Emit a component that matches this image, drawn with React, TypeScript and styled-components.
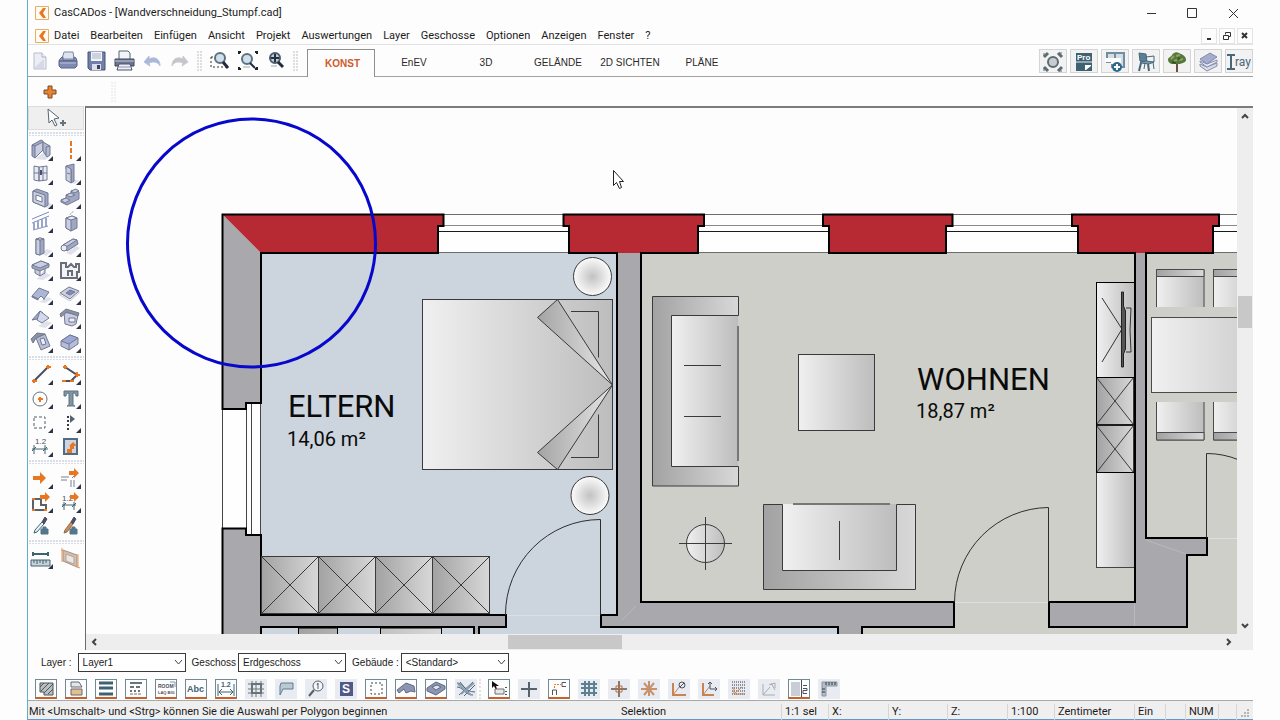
import React, { ReactNode } from "react";
import styled, { createGlobalStyle } from "styled-components";

const UI_FONT = `Roboto, "Open Sans", sans-serif`;
const CLASSIC_FONT = `"Liberation Sans", Arial, sans-serif`;

const GlobalStyle = createGlobalStyle`
  *, *::before, *::after { box-sizing: border-box; }
  body {
    margin: 0;
    background: #fdfdfd;
    color: #1c1c1c;
    font-family: ${UI_FONT};
    font-size: 11px;
    line-height: 16px;
  }
  button, select {
    font: inherit;
    color: inherit;
    margin: 0;
    padding: 0;
    border: 0;
    background: none;
  }
`;

/* ---------- icons ---------- */

const L = "#c9cee0";
const M = "#a0a7c2";
const D = "#727993";
const K = "#4b5060";
const O = "#e87722";
const T = "#3f6273";

const icons: Record<string, ReactNode> = {
  fresh: (
    <g>
      <path d="M6 4h8l4 4v12H6z" fill="#eceef5" stroke="#b9bccb" />
      <path d="M14 4v4h4" fill="#fafafe" stroke="#a9adbd" />
      <path d="M7 18l9-8v9H7z" fill="#d6d9e6" />
    </g>
  ),
  open: (
    <g>
      <path d="M8 3h9l1 7H6z" fill="#dfe3f1" stroke="#7d86a6" />
      <path d="M4 10l2-2h1v3h11V8l2 1 1 3H3z" fill="#8f9abf" stroke="#5e6888" />
      <path d="M3 12h18v5l-2 2H5l-2-2z" fill="#7f8bb2" stroke="#5a6486" />
      <path d="M4 14h16" stroke="#b9c2de" />
    </g>
  ),
  save: (
    <g>
      <path d="M4 3h17v18H6l-2-2z" fill="#7080a8" stroke="#485376" />
      <path d="M7 3h11v9H7z" fill="#f4f5fa" />
      <path d="M8 5h9M8 7h9M8 9h9" stroke="#a8aec4" />
      <path d="M8 15h9v6H8z" fill="#dce0ec" />
      <path d="M13 16h3v4h-3z" fill="#39425f" />
    </g>
  ),
  print: (
    <g>
      <path d="M7 2h9l2 2v7H7z" fill="#f2f4fa" stroke="#5a6078" />
      <path d="M3 10h19v7H3z" fill="#6d7690" stroke="#3f4557" />
      <path d="M3 12h19" stroke="#c3c9da" />
      <path d="M7 15h11l2 6H5z" fill="#eef0f7" stroke="#4e5468" />
      <path d="M7 18h11" stroke="#8f96ab" />
    </g>
  ),
  undo: <path d="M4 13l5-6v3c6-3 11 0 11 7-2-4-6-5-11-3l1 3z" fill="#a9b8da" stroke="#b3c0de" />,
  redo: <path d="M20 13l-5-6v3C9 7 4 10 4 17c2-4 6-5 11-3l-1 3z" fill="#c5c6ca" stroke="#cbccd0" />,
  zoomWindow: (
    <g>
      <path d="M3 8h5M3 8v10h16" fill="none" stroke="#333" strokeDasharray="2 2" />
      <circle cx="12" cy="9" r="5" fill="#cfe0ec" stroke="#5c7182" strokeWidth="2" />
      <path d="M15 13l5 6" stroke="#232a3a" strokeWidth="3" />
    </g>
  ),
  zoomAll: (
    <g>
      <path d="M3 5V3h2M19 3h2v2M3 18v2h2M19 20h2v-2" fill="none" stroke="#222" strokeWidth="2" />
      <circle cx="11" cy="10" r="5" fill="#cfe0ec" stroke="#5c7182" strokeWidth="2" />
      <path d="M14 14l5 5" stroke="#232a3a" strokeWidth="2" />
      <path d="M7 18h7" stroke="#9aa" />
    </g>
  ),
  zoomPan: (
    <g>
      <circle cx="11" cy="9" r="5" fill="#bccfd9" stroke="#4b5b6b" strokeWidth="2" />
      <path d="M11 5v8M7 9h8" stroke="#26303c" strokeWidth="2" />
      <path d="M14 13l5 5" stroke="#232a3a" strokeWidth="3" />
      <path d="M7 17h6" stroke="#9aa" />
    </g>
  ),
  plus: <path d="M10 6h4v4h4v4h-4v4h-4v-4H6v-4h4z" fill="#e8842f" stroke="#7b4a28" />,
  focus: (
    <g fill="none" stroke="#5d6b72">
      <path d="M3 7l4-4M17 3l4 4M3 17l4 4M17 21l4-4" strokeWidth="3" />
      <path d="M3 3v3M18 3h3M3 21v-3M18 21h3" strokeWidth="1" />
      <circle cx="12" cy="12" r="5" fill="#c8ccd0" strokeWidth="2" />
    </g>
  ),
  proDoc: (
    <g>
      <path d="M4 3h16v18H4z" fill={T} />
      <text x="5" y="10" fontSize="8" fontWeight="700" fill="#fff" fontFamily={CLASSIC_FONT}>Pro</text>
      <path d="M4 12h16" stroke="#e9eef0" />
      <path d="M13 15h6v1l-5 4h-1z" fill="#fff" />
    </g>
  ),
  planAdd: (
    <g>
      <path d="M4 3h17v14H9v-5H4z" fill="#d5dde4" stroke="#6f8fa0" strokeWidth="2" />
      <path d="M12 3v5" stroke="#6f8fa0" strokeWidth="2" />
      <path d="M2 8h16v6H8v-2H2z" fill="#fff" />
      <circle cx="14" cy="17" r="5" fill="#2c6a8c" />
      <path d="M14 14v6M11 17h6" stroke="#fff" strokeWidth="2" />
    </g>
  ),
  chair: (
    <g stroke="#45677a" fill="none">
      <path d="M5 3l7 1 1 8-7-1z" fill="#5b8093" />
      <path d="M12 7l8-1v6" />
      <path d="M6 12l6-1 8 1-5 2-8-1z" fill="#7c9baa" />
      <path d="M7 13L5 21M14 14l1 7" strokeWidth="2" />
      <path d="M19 12l1 7M11 13l-1 6" />
    </g>
  ),
  tree: (
    <g>
      <path d="M12 12v10" stroke="#6d5138" strokeWidth="2" />
      <path d="M3 10c0-3 3-3 4-5s4-4 7-2 4 1 6 4 1 5-2 6-3 1-6 1-8 1-9-4z" fill="#56783a" />
      <path d="M6 9l3-3M11 6l4-1M14 10l4-1M9 11l3-1" stroke="#8aa661" strokeWidth="2" />
      <path d="M7 12l4 1M13 8l2 1" stroke="#35512a" strokeWidth="2" />
    </g>
  ),
  layers: (
    <g stroke="#858caa">
      <path d="M4 16l7 5 10-5v-3L11 17l-7-3z" fill="#d9dcea" />
      <path d="M4 12l7 5 10-5v-2L11 14l-7-3z" fill="#eceef6" />
      <path d="M4 9l10-6 7 4-10 7z" fill="#a6acd0" />
    </g>
  ),
  iray: (
    <g>
      <path d="M0 5h8M0 19h8M4 5v14" stroke="#49677a" strokeWidth="2" />
      <text x="8" y="16" fontSize="12" fill="#49677a" fontFamily={UI_FONT}>ray</text>
    </g>
  ),
  pointer: (
    <g>
      <path d="M4 2l1 14 3-3 3 6 2-1-3-6 5-1z" fill="#fff" stroke="#566373" />
      <path d="M19 13v6M16 16h6" stroke="#66727f" strokeWidth="2" />
    </g>
  ),
  wall: (
    <g stroke={D}>
      <path d="M5 21l9-7 6 4-5 4z" fill="#dfe2ec" stroke="none" />
      <path d="M2 7l9-5 2 1v9l-8 8-3-2z" fill={M} />
      <path d="M5 8l8-4v8l-8 8z" fill={L} />
      <path d="M13 4l7 4v9l-3 2-4-6z" fill="#b3b9cf" />
      <path d="M16 9l4-1M16 9v8M2 7l3 1" fill="none" />
    </g>
  ),
  axis: <path d="M13 3v18" stroke={O} strokeWidth="2" strokeDasharray="5 2" />,
  windowTool: (
    <g stroke={D}>
      <path d="M4 4l5 1v14l-5-1zM9 5l8-1v14l-8 1z" fill="#e7eaf4" />
      <path d="M13 5v14M4 11h13" />
      <path d="M11 8v5" stroke={K} strokeWidth="2" />
    </g>
  ),
  door: (
    <g stroke={D}>
      <path d="M10 19l5-2 6 2-5 3z" fill="#dfe2ec" stroke="none" />
      <path d="M8 4l8-2v17l-3 2V8L8 7z" fill={M} />
      <path d="M8 4l5 3v14l-5-3z" fill={L} />
      <path d="M9 11l3 1" />
    </g>
  ),
  opening: (
    <g stroke={D}>
      <path d="M12 20l5-4 5 2-4 4z" fill="#dfe2ec" stroke="none" />
      <path d="M3 5l4-2 11 4v12l-3 2-12-5z" fill={M} />
      <path d="M3 5l12 4v12L3 16z" fill={L} />
      <path d="M6 9l6 2v5l-6-2z" fill="#fff" />
    </g>
  ),
  stairs: (
    <g stroke={D}>
      <path d="M3 14l5-2v-3l5-2V5l6-1 2 2v7l-12 6-6-3z" fill={M} />
      <path d="M3 14l5-2 4 2-5 3zM8 9l5-2 4 2-5 2zM13 5l5-2 3 2-5 2z" fill={L} />
    </g>
  ),
  railing: (
    <g stroke="#7c8cb8" fill="none">
      <path d="M2 9l17-7M2 13l17-7M3 20l15-4" />
      <path d="M4 12v8M8 10v9M12 9v9M16 8v8" strokeWidth="2" stroke="#9aa7cb" />
    </g>
  ),
  chimney: (
    <g stroke={D}>
      <path d="M8 8l6-2 5 2v10l-6 3-5-3z" fill={M} />
      <path d="M8 8l5 2v11l-5-3z" fill={L} />
      <path d="M8 8l6-2 5 2-6 2z" fill="#eceef6" />
      <path d="M12 5c0-3 3-1 3-4" stroke="#b5b9c6" fill="none" />
    </g>
  ),
  column: (
    <g stroke={D}>
      <path d="M11 19l6-4 5 2-6 5z" fill="#dfe2ec" stroke="none" />
      <path d="M6 5l4-1 4 1v14l-4 2-4-1z" fill={M} />
      <path d="M6 5l4 1v15l-4-1z" fill={L} />
      <path d="M6 5l4-1 4 1-4 1z" fill="#fff" />
    </g>
  ),
  beam: (
    <g stroke={D}>
      <path d="M8 19l10-7 4 2-9 7z" fill="#dfe2ec" stroke="none" />
      <path d="M5 11l10-6 4 1 1 4-11 7z" fill={M} />
      <path d="M5 11l10-6 4 1-11 7z" fill={L} />
      <ellipse cx="6" cy="14" rx="3" ry="3" fill="#eceef6" />
    </g>
  ),
  slab: (
    <g stroke={D}>
      <path d="M6 21l10-6 5 2-8 5z" fill="#dfe2ec" stroke="none" />
      <path d="M5 11v4l5 3v-5M10 18l5-3v-4" fill={L} />
      <path d="M2 7l9-4 8 3v3l-9 4-8-3z" fill={M} />
      <path d="M2 7l9-4 8 3-9 4z" fill={L} />
    </g>
  ),
  outline: (
    <g stroke="#6a6e7a" fill="none">
      <path d="M3 5h5v4h2l3-3 3 3h2V6h3v8h-2v6H3z" strokeWidth="2" fill="#f2f3f6" />
      <path d="M10 18v-5h4v5" strokeWidth="2" />
    </g>
  ),
  roofA: (
    <g stroke={D}>
      <path d="M9 20l9-5 4 2-7 4z" fill="#dfe2ec" stroke="none" />
      <path d="M2 14l7-8 10 4-5 7-3-3-3 3z" fill="#aeb6d6" />
      <path d="M2 14l6 3v1l-6-3zM14 17v1" fill={M} />
    </g>
  ),
  roofB: (
    <g stroke={D}>
      <path d="M2 11l9-6 10 4-9 8z" fill={L} />
      <path d="M8 11l4-3 5 2-5 3z" fill="#7f8cbb" />
      <path d="M2 11v2l10 6 9-8V9" fill="none" stroke="#c3c7d6" />
    </g>
  ),
  roofC: (
    <g stroke={D}>
      <path d="M8 20l9-5 5 2-7 5z" fill="#dfe2ec" stroke="none" />
      <path d="M2 14l8-9 3 2-6 6z" fill={M} />
      <path d="M10 5l9 7-7 5-5-3z" fill="#d3d8ec" />
    </g>
  ),
  dormer: (
    <g stroke={D}>
      <path d="M6 6l14 3-2 9-4 2-7-2z" fill={L} />
      <path d="M2 8l6-5 13 4-1 3L9 6l-6 5z" fill="#8c929f" />
      <path d="M11 12h6v4h-6z" fill="#eef0f8" />
    </g>
  ),
  skylight: (
    <g stroke={D}>
      <path d="M6 8l9-4 5 12-9 4z" fill="#b7bdd6" />
      <path d="M1 9l6-6 8 1-9 4-3 5z" fill="#8c929f" />
      <path d="M10 9l4-1 2 6-4 1z" fill="#e9ecfa" />
    </g>
  ),
  solid: (
    <g stroke={D}>
      <path d="M3 11l9-6 8 3v6l-9 6-8-4z" fill="#b7bdd6" />
      <path d="M3 11l9-6 8 3-9 6z" fill="#9ea8d6" />
      <path d="M11 14v6" />
    </g>
  ),
  line: (
    <g>
      <path d="M4 19L18 5" stroke={K} strokeWidth="2" />
      <path d="M2 19h5M4 17v4M16 5h5M18 3v4" stroke={O} strokeWidth="2" />
    </g>
  ),
  polyline: (
    <g fill="none">
      <path d="M7 5l12 8-6 6H6" stroke={K} strokeWidth="2" />
      <path d="M5 5h4M7 3v4M17 13h5M19 10v5M4 19h4M12 19h4" stroke={O} strokeWidth="2" />
    </g>
  ),
  circle: (
    <g fill="none">
      <circle cx="10" cy="13" r="7" stroke="#6b7079" />
      <path d="M10 11v5M8 13h5" stroke={O} strokeWidth="2" />
    </g>
  ),
  text: (
    <path d="M6 5h14v5h-2c0-2-1-3-3-3v11c0 1 1 2 2 2H9c1 0 2-1 2-2V7C9 7 8 8 8 10H6z" fill="#8194a4" stroke="#5c7080" />
  ),
  select: <path d="M4 7h11v11H4z" fill="none" stroke="#555b66" strokeDasharray="3 2" />,
  mirror: (
    <g>
      <path d="M10 6v14" stroke="#333a48" strokeWidth="2" strokeDasharray="2 2" />
      <path d="M12 5l5 4-5 4z" fill="#566270" />
    </g>
  ),
  dimension: (
    <g stroke={T} fill="none">
      <text x="5" y="10" fontSize="8" fill={K} stroke="none" fontFamily={CLASSIC_FONT}>1.2</text>
      <path d="M2 15h16M4 11v9M15 11v9M2 17l4-4M13 17l4-4" />
    </g>
  ),
  image: (
    <g>
      <path d="M6 5h13v15H6z" fill="#cbd5e6" stroke="#526b82" strokeWidth="2" />
      <path d="M9 19v-4h3v-3h-1l4-4 4 4h-3v3h-2v4z" fill={O} />
    </g>
  ),
  move: <path d="M3 10h7V6l6 6-6 6v-4H3z" fill={O} />,
  moveWall: (
    <g>
      <path d="M3 11h8M3 14h6M13 14v7M16 14v7M14 12l2-2" stroke="#7b828e" />
      <path d="M11 5h5V2l5 5-5 5V9h-5z" fill={O} />
    </g>
  ),
  moveShape: (
    <g>
      <path d="M3 9h8v6h5v5H3z" fill="none" stroke="#5b6069" strokeWidth="2" />
      <path d="M2 9h3M2 20h3M14 20h3" stroke={O} strokeWidth="2" />
      <path d="M10 5h5V2l5 5-5 5V9h-5z" fill={O} />
    </g>
  ),
  moveDim: (
    <g fill="none">
      <text x="4" y="11" fontSize="8" fill={K} fontFamily={CLASSIC_FONT}>1.2</text>
      <path d="M4 15h14M6 12v8M16 12v8M4 17l4-4M14 17l4-4" stroke={T} />
      <path d="M12 5h4V2l5 5-5 5V9h-4z" fill={O} />
    </g>
  ),
  pipette: (
    <g>
      <path d="M4 19l1-3 7-8 2 2-7 8z" fill="#eef2f6" stroke={T} />
      <path d="M12 8l3-5 2 2-3 5z" fill={K} stroke={K} />
      <path d="M11 15h7v5h-7zM13 15v-2h3v2" fill="#55778c" stroke="#55778c" />
    </g>
  ),
  pipetteFill: (
    <g>
      <path d="M6 19l1-3 6-8 2 2-6 8z" fill="#d98c4d" stroke="#8b6a4d" />
      <path d="M13 8l3-5 2 2-3 5z" fill={K} stroke={K} />
      <path d="M12 15h7v5h-7zM14 15v-2h3v2" fill="#55778c" stroke="#55778c" />
    </g>
  ),
  ruler: (
    <g stroke={T} fill="none">
      <path d="M3 8h15M3 6v4M18 6v4" strokeWidth="2" />
      <path d="M1 14h19v6H1z" fill="#c9d2d6" />
      <path d="M4 14v3M7 14v4M10 14v3M13 14v4M16 14v3" />
    </g>
  ),
  section: (
    <g>
      <path d="M5 4l14 5v12L5 15z" fill="#cdbfb6" stroke="#a8907f" />
      <path d="M8 8l8 3v7l-8-3z" fill="#ece6e2" stroke="#b5a396" />
      <path d="M4 2v14M20 8v14M3 4l4 1M17 20l5 2" stroke="#e39a5d" />
    </g>
  ),
  hatch: (
    <g stroke="#4a555b">
      <path d="M5 5h13v12H9v-3H5z" fill="#b9bfc2" />
      <path d="M5 9l4-4M6 13l8-8M9 15l9-9M13 16l5-5" />
    </g>
  ),
  fill: (
    <g>
      <path d="M6 4h8l3 5H6z" fill="#e4e6e8" stroke="#667" />
      <path d="M6 11h11v6H6z" fill="#e3c08f" stroke="#667" />
    </g>
  ),
  lineWeight: <path d="M4 5h14M4 10h14M4 16h14" stroke={T} strokeWidth="3" />,
  lineType: (
    <g stroke="#6a7378">
      <path d="M5 5h12" strokeWidth="2" />
      <path d="M5 9h12" strokeDasharray="4 2" strokeWidth="2" />
      <path d="M5 13h12" strokeDasharray="2 2" strokeWidth="2" />
      <path d="M5 16h12" strokeDasharray="3 1" />
    </g>
  ),
  room: (
    <g fontFamily={CLASSIC_FONT} fontWeight="700" fill={K}>
      <text x="3" y="10" fontSize="5">ROOM</text>
      <text x="3" y="16" fontSize="4">LAQ BIG</text>
      <path d="M15 4h5v5" fill="none" stroke="#8c979c" />
    </g>
  ),
  abc: (
    <text x="2" y="14" fontSize="9" fontWeight="700" fill={T} fontFamily={CLASSIC_FONT}>Abc</text>
  ),
  measure: (
    <g stroke={T}>
      <text x="6" y="9" fontSize="7" fill={T} stroke="none" fontWeight="700" fontFamily={CLASSIC_FONT}>1.2</text>
      <path d="M3 6v12M19 6v12M4 14h14M7 11l-3 3 3 3M15 11l3 3-3 3" fill="none" />
    </g>
  ),
  gridTool: (
    <g stroke="#6a7279" fill="none">
      <path d="M7 6h9v9H7z" strokeWidth="2" />
      <path d="M3 6h16M3 15h16M7 3v16M16 3v16M11 3v16M3 11h16" />
    </g>
  ),
  callout: <path d="M6 5h12v6H8l-3 6V8z" fill="#b9cad5" stroke="#5e7e8f" />,
  loupeOne: (
    <g stroke="#565f68">
      <circle cx="13" cy="8" r="5" fill="#f4f6f9" />
      <path d="M9 12l-5 6" strokeWidth="2" />
      <path d="M12 7l1-2v6" fill="none" />
    </g>
  ),
  letterS: (
    <g>
      <path d="M5 4h13v14H5z" fill="#505a86" />
      <text x="7" y="15" fontSize="12" fontWeight="700" fill="#fff" fontFamily={CLASSIC_FONT}>S</text>
    </g>
  ),
  frame: <path d="M6 5h11v11H6z" fill="none" stroke="#3e464c" strokeDasharray="2 2" />,
  roofSmall: (
    <g stroke="#606a84">
      <path d="M2 12l9-7 8 3 1 6-4-1-5 2-2-4-5 4z" fill="#8c95b2" />
    </g>
  ),
  slabSmall: (
    <g stroke="#606a84">
      <path d="M2 10l9-6 9 4v3l-9 6-9-4z" fill="#8c95b2" />
      <path d="M7 9l5-2 4 2-5 3z" fill="#e0e4f0" />
    </g>
  ),
  strands: (
    <g stroke="#4f6477" fill="none">
      <path d="M2 5c6 0 8 9 18 9M2 9c6 0 8 8 16 8M18 4L4 17M20 7L9 18M5 4l10 12" />
      <path d="M3 6l13 11M19 5L6 16" stroke="#8ba0b2" strokeWidth="2" />
    </g>
  ),
  hint: (
    <g>
      <path d="M4 3v7l2-2 2 4 1-1-1-3h3z" fill="#111" />
      <path d="M7 11h9v5H7z" fill="#e7e7ea" stroke="#6a6e72" />
      <path d="M18 9v1M18 13v1M18 16v1" stroke={K} strokeWidth="2" />
    </g>
  ),
  cross: <path d="M11 4v15M3 11h16" stroke="#5a6168" strokeWidth="2" />,
  ortho: (
    <g fill="none" stroke="#54585c">
      <path d="M4.5 17v-5h4v5M18 4.5h-4v4h4" strokeWidth="1" />
      <path d="M6.5 10V6.5H13" stroke={O} strokeDasharray="2 1" />
    </g>
  ),
  grid: <path d="M7 3v15M11 3v15M16 3v15M3 6h16M3 10h16M3 15h16" stroke="#5d8191" fill="none" strokeWidth="2" />,
  snapPoint: (
    <g fill="none" stroke="#857a72">
      <path d="M11 3v16M3 11h16" strokeWidth="2" />
      <path d="M8 8h6v6H8z" stroke="#c8692f" />
    </g>
  ),
  star: <path d="M11 3v15M3 11h16M6 5l10 12M16 5L6 17" stroke="#bd7a48" strokeWidth="2" strokeOpacity="0.8" />,
  angleRef: (
    <g fill="none">
      <path d="M5 5v12h13" stroke="#c98350" strokeWidth="2" />
      <path d="M5 17l7-9" stroke="#c98350" />
      <circle cx="14" cy="7" r="3" stroke={K} />
      <path d="M12 9l4-4" stroke={K} />
    </g>
  ),
  axisRef: (
    <g fill="none">
      <path d="M5 5v12h11" stroke="#c98350" strokeWidth="2" />
      <path d="M5 17l7-9" stroke="#c98350" />
      <path d="M12 11V4M10 6l2-2 2 2M12 11h7M17 9l2 2-2 2" stroke={K} />
    </g>
  ),
  dots: (
    <g>
      <path d="M4 4h14M4 7h14M4 10h14M4 13h14M4 16h14" stroke="#8b9197" strokeWidth="2" strokeDasharray="1 1" />
      <path d="M6 9v7h10M6 16l8-7" stroke="#c98350" fill="none" />
    </g>
  ),
  angleOff: (
    <g fill="none" stroke="#a9aaad">
      <path d="M5 6v11h12M5 17l7-8" />
      <path d="M11 7l6-2v5M13 5l4 7" />
    </g>
  ),
  panel: (
    <g>
      <path d="M3 4h9v14H3z" fill="#c9ced6" />
      <path d="M13.5 2v17" stroke={K} />
      <path d="M15 7.5h4M15 10.500h4v2h-4v3h4" stroke={K} fill="none" />
    </g>
  ),
  scale: (
    <g fill="none" stroke="#8b95a0">
      <path d="M4 4h15v4H8v10H4z" fill="#b3bbc3" />
      <path d="M8 4v3M11 4v3M14 4v3M17 4v3M4 11h3M4 14h3" stroke="#333b44" />
    </g>
  ),
};

const Svg = styled.svg`
  display: block;
  flex: none;
`;

const Icon = ({ name, flyout }: { name: string; flyout?: boolean }) => (
  <Svg width="24" height="24" viewBox="0 0 24 24" aria-hidden="true">
    {icons[name]}
    {flyout && <path d="M23 18v5h-5z" fill="#2e3346" />}
  </Svg>
);

const SmallIcon = ({ name }: { name: string }) => (
  <Svg width="20" height="17" viewBox="1 2 20 17" aria-hidden="true">
    {icons[name]}
  </Svg>
);

const AppMark = () => (
  <Svg width="16" height="16" viewBox="0 0 16 16" aria-hidden="true">
    <path d="M1.5 1.5h13v13h-13z" fill="#fffaf2" stroke="#e9ae62" />
    <path d="M9 3h3L9 8l3 5H9L5 8z" fill={O} />
  </Svg>
);

/* ---------- window frame ---------- */

const Frame = styled.div`
  display: flex;
  flex-direction: column;
  height: 100vh;
  min-height: 640px;
  margin: 0 27px;
  border-left: 1px solid #5fb0d0;
  border-bottom: 1px solid #5b9bd0;
`;

const TitleBar = styled.header`
  display: flex;
  align-items: center;
  gap: 4px;
  height: 26px;
  padding: 0 2px 0 6px;
`;

const Title = styled.h1`
  flex: 1;
  margin: 0;
  font-size: 11px;
  font-weight: 400;
`;

const CaptionButton = styled.button`
  display: grid;
  place-items: center;
  width: 37px;
  height: 26px;
`;

const MenuBar = styled.nav`
  display: flex;
  align-items: center;
  gap: 11px;
  height: 19px;
  padding: 2px 0 0 6px;
  border-bottom: 1px solid #e2e2e2;
`;

const MenuMark = styled.span`
  margin-right: -7px;
`;

const ChildButtons = styled.div`
  display: flex;
  gap: 2px;
  margin-left: auto;
`;

const ChildButton = styled.button`
  display: grid;
  place-items: center;
  width: 16px;
  height: 16px;
  border: 1px solid #e4e4e4;
`;

const ToolBar = styled.div`
  display: flex;
  align-items: center;
  gap: 4px;
  height: 32px;
  border-bottom: 1px solid #a2a2a2;
`;

const ToolButton = styled.button`
  display: grid;
  place-items: center;
  width: 24px;
  height: 24px;
`;

const Grip = styled.span<{ $faint?: boolean }>`
  width: 6px;
  height: 20px;
  margin: 0 1px;
  opacity: ${(p) => (p.$faint ? 0.4 : 1)};
  background: radial-gradient(circle at 1px 1px, #dedee2 1px, transparent 1px) 0 0 / 3px 3px;
`;

const Tabs = styled.div`
  display: flex;
  align-self: flex-end;
  margin: 0 auto -1px 3px;
  font-family: ${CLASSIC_FONT};
  font-size: 10px;
`;

const Tab = styled.button<{ $active?: boolean }>`
  width: ${(p) => (p.$active ? 68 : 72)}px;
  height: 28px;
  margin-right: ${(p) => (p.$active ? 3 : 0)}px;
  padding-left: ${(p) => (p.$active ? 3 : 0)}px;
  border: ${(p) => (p.$active ? "1px solid #8f8f8f" : "0")};
  border-bottom: 0;
  background: ${(p) => (p.$active ? "#fdfdfd" : "none")};
  color: ${(p) => (p.$active ? "#cf5a2a" : "#2a2a2a")};
  font-weight: ${(p) => (p.$active ? 700 : 400)};
`;

const Modules = styled.div`
  display: flex;
  gap: 3px;
`;

const ModuleButton = styled.button`
  display: grid;
  place-items: center;
  width: 28px;
  height: 24px;
  border: 1px solid #d4d4d4;
  background: #f2f2f2;
`;

const SubBar = styled.div`
  display: flex;
  align-items: center;
  gap: 48px;
  height: 29px;
  padding-left: 10px;
`;

/* ---------- work area ---------- */

const Work = styled.main`
  display: flex;
  flex: 1;
  min-height: 0;
`;

const Palette = styled.aside`
  width: 57px;
  flex: none;
  overflow: hidden;
`;

const SelectButton = styled.button`
  display: grid;
  place-items: center;
  width: 56px;
  height: 24px;
  border: 1px solid #dcdcdc;
  background: #efefef;
`;

const PaletteGrip = styled.div`
  height: 8px;
  padding: 2px 1px;
  background: radial-gradient(circle at 1px 1px, #d9dde8 1px, transparent 1px) 0 0 / 3px 3px content-box;
`;

const PaletteGroup = styled.div`
  display: grid;
  grid-template-columns: 28px 28px;
  grid-auto-rows: 24px;
  justify-items: center;
`;

const Viewer = styled.section`
  display: grid;
  grid-template: minmax(0, 1fr) 16px / minmax(0, 1fr) 16px;
  flex: 1;
  min-width: 0;
  border-top: 2px solid #7c7c7c;
  border-left: 1px solid #6c6c6c;
`;

const Plan = styled.svg`
  display: block;
  width: 100%;
  height: 100%;
`;

const Scroll = styled.div<{ $vertical?: boolean }>`
  display: flex;
  flex-direction: ${(p) => (p.$vertical ? "column" : "row")};
  background: #eeeeee;
`;

const ScrollButton = styled.button`
  display: grid;
  place-items: center;
  width: 16px;
  height: 16px;
`;

const Track = styled.div<{ $share: number }>`
  flex: ${(p) => p.$share} 1 0;
`;

const Thumb = styled.div<{ $vertical?: boolean }>`
  flex: 0 0 ${(p) => (p.$vertical ? 32 : 114)}px;
  margin: ${(p) => (p.$vertical ? "0 1px" : "1px 0")};
  background: #c8c8c8;
`;

const Corner = styled.div`
  background: #eeeeee;
`;

/* ---------- bottom bars ---------- */

const PickBar = styled.div`
  display: flex;
  align-items: center;
  gap: 6px;
  height: 25px;
  padding-left: 13px;
  font-family: ${CLASSIC_FONT};
  font-size: 10px;
`;

const Picker = styled.div`
  display: flex;
  align-items: center;
  gap: 2px;
`;

const Caption = styled.label<{ $spaced?: boolean }>`
  margin-right: ${(p) => (p.$spaced ? 4 : 0)}px;
`;

const SelectBox = styled.div`
  position: relative;
  width: 108px;
`;

const Select = styled.select`
  appearance: none;
  width: 100%;
  height: 19px;
  padding: 0 20px 0 4px;
  border: 1px solid #3a3a3a;
  border-radius: 0;
  background: #fff;
`;

const Chevron = styled(Svg)`
  position: absolute;
  right: 3px;
  top: 6px;
  pointer-events: none;
`;

const OptionBar = styled.div`
  display: flex;
  align-items: center;
  height: 26px;
  padding: 2px 0 0 7px;
  border-bottom: 1px solid #a8a8a8;
`;

const OptionGroup = styled.div`
  display: flex;
  gap: 8px;
`;

const OptionButton = styled.button<{ $on?: boolean }>`
  display: grid;
  place-items: center;
  width: 22px;
  height: 20px;
  background: ${(p) => (p.$on ? "#fdfdfd" : "#e8ecf2")};
  border: ${(p) => (p.$on ? "1px solid #6f8a92" : "0")};
  border-bottom: ${(p) => (p.$on ? "2px solid #c8602c" : "0")};
`;

const OptionGap = styled.span`
  width: 4px;
  height: 20px;
  margin: 0 5px 0 2px;
  border-left: 2px dotted #e2e2e2;
`;

const StatusBar = styled.footer`
  display: flex;
  align-items: center;
  height: 18px;
  padding-top: 3px;
  background: #efefef;
  white-space: nowrap;
`;

const Message = styled.span`
  flex: 1;
  padding-left: 1px;
`;

const StatusCell = styled.span<{ $w: number; $plain?: boolean }>`
  width: ${(p) => p.$w}px;
  height: 16px;
  padding-left: 3px;
  border-left: 1px solid ${(p) => (p.$plain ? "transparent" : "#d6d6d6")};
`;

/* ---------- floor plan ---------- */

const WALL = "#a9a8ad";
const RED = "#b72a33";
const BLUE_ROOM = "#ccd4de";
const GREY_ROOM = "#cecfc9";

const Crossed = ({ x, y, w, h }: { x: number; y: number; w: number; h: number }) => (
  <g stroke="#3a3a3a" fill="none">
    <rect x={x} y={y} width={w} height={h} fill="url(#dark)" />
    <path d={`M${x} ${y}l${w} ${h}M${x + w} ${y}l${-w} ${h}`} />
  </g>
);

const WindowOpening = ({ x, w }: { x: number; w: number }) => (
  <g fill="none">
    <rect x={x} y="214" width={w} height="39" fill="#fefefe" />
    <path d={`M${x} 214.5h${w}M${x} 252.5h${w}`} stroke="#6c6c6c" />
    <path d={`M${x} 225.5h${w}`} stroke="#8a8a8a" />
    <path d={`M${x} 231.5h${w}`} stroke="#1a1a1a" />
  </g>
);

const FloorPlan = () => (
  <Plan role="img" aria-label="Grundriss">
    <defs>
      <linearGradient id="light"><stop offset="0" stopColor="#f0f0f0" /><stop offset="1" stopColor="#bdbdbd" /></linearGradient>
      <linearGradient id="dark"><stop offset="0" stopColor="#a2a2a2" /><stop offset="1" stopColor="#d8d8d8" /></linearGradient>
      <linearGradient id="fold"><stop offset="0" stopColor="#a4a4a4" /><stop offset="1" stopColor="#e6e6e6" /></linearGradient>
      <radialGradient id="round"><stop offset="0" stopColor="#c2c2c2" /><stop offset="1" stopColor="#fbfbfb" /></radialGradient>
    </defs>
    <g transform="translate(-86 -108)">
      <path d="M260 252H618V616H601V634H261V616z" fill={BLUE_ROOM} />
      <path d="M600 626H840V660H261V626z" fill={BLUE_ROOM} />
      <path d="M640 252H2400V1200H860V626H640z" fill={GREY_ROOM} />

      <WindowOpening x={438} w={132} />
      <WindowOpening x={697} w={133} />
      <WindowOpening x={946} w={133} />
      <WindowOpening x={1212} w={134} />
      <path d="M222 408h38v122h-38z" fill="#fefefe" />
      <path d="M222.5 408v122M246.5 403v132M251.5 403v132M260.5 403v132" stroke="#444" />

      <path d="M222 214l39 39v150h-15v6h-24z" fill={WALL} />
      <path d="M222 214h221v12h-5v27H261z" fill={RED} />
      <path d="M222.5 409V214.5H443.5V226H438V253H261V403H246V409z" fill="none" stroke="#000" strokeWidth="2" />

      <g fill={WALL}>
        <path d="M222 529h24v6h15v80h245v12H479V1200H222z" />
        <path d="M617 252h24v350h313v25h-92V1200H838V627H601v-12h16z" />
        <path d="M1135 252h11v286h61v17h-20v72h-138v-25h86z" />
      </g>
      <g stroke="#b9b8bd" fill="none">
        <path d="M506 615.5h94M954 602.5h95M1207 538.5h60" stroke="#dcdfe3" />
        <path d="M1146 540l40 14M1134.5 602v24M622 620l14-14" />
      </g>
      <g fill={RED} stroke="#000" strokeWidth="2">
        <path d="M563.5 214.5H704V226H698V253H569V226H563.5z" />
        <path d="M823 214.5H952.5V226H946V253H829V226H823z" />
        <path d="M1072 214.5H1219V226H1213V253H1078V226H1072z" />
      </g>
      <path d="M618 252h22v3h-22zM1136 252h9v3h-9z" fill={WALL} />
      <path d="M618 250h22v3h-22zM1136 250h9v3h-9z" fill={RED} />
      <g fill="none" stroke="#000" strokeWidth="2">
        <path d="M222.5 1200V528.5H246V535H261V615H506V627H479V1200" />
        <path d="M261 1200V627H474V1200" fill={BLUE_ROOM} />
        <path d="M617 252V615H601V627H838V1200M862 1200V627H954V602H641V252" />
        <path d="M1135 252V602H1049V627H1187V555H1207V538H1146V252" />
      </g>
      <path d="M298.5 628h39V1200h-39zM380.5 628h61V1200h-61z" fill="url(#dark)" stroke="#000" />

      <g fill="none" stroke="#2e2e2e">
        <path d="M600.5 615V519.5A95 95 0 0 0 505.5 615" />
        <path d="M1048.5 602V507.5A95 95 0 0 0 954.5 602" />
        <path d="M1206.5 538V453.5A85 85 0 0 1 1291.5 538" />
      </g>

      <g stroke="#3a3a3a" fill="none">
        <rect x="422.5" y="299.5" width="190" height="170" fill="url(#light)" />
        <path d="M571 311.5h27.5v46M571 457.5h27.5v-43" />
        <path d="M557.5 299.5l-20 18L612.5 385z" fill="url(#fold)" />
        <path d="M557.5 469.5l-20-17L612.5 385z" fill="url(#fold)" />
        <circle cx="592.5" cy="276.5" r="19" fill="url(#round)" />
        <circle cx="590" cy="495.5" r="19" fill="url(#round)" />
      </g>
      <Crossed x={261.5} y={556.5} w={57} h={57} />
      <Crossed x={318.5} y={556.5} w={57} h={57} />
      <Crossed x={375.5} y={556.5} w={57} h={57} />
      <Crossed x={432.5} y={556.5} w={57} h={57} />

      <g stroke="#3a3a3a" fill="none">
        <path d="M652.5 296.5h86v19h-67v151h67v19.5h-86z" fill="url(#dark)" />
        <path d="M672 316h66v150h-66z" fill="url(#light)" stroke="none" />
        <path d="M738 326v135" stroke="#777" strokeWidth="2" />
        <path d="M684 365.5h37M684 416.5h37" />
        <rect x="798.5" y="354.5" width="76" height="76" fill="url(#light)" />
        <path d="M763.5 504.5h19v66h114v-66h19v85h-152z" fill="url(#dark)" />
        <path d="M783 504h113v66H783z" fill="url(#light)" stroke="none" />
        <path d="M793 504h97" stroke="#777" strokeWidth="2" />
        <path d="M839.5 521v39" />
        <circle cx="705.5" cy="543.5" r="19" fill="url(#light)" />
        <path d="M679 543.5h53M705.5 517v53" />
      </g>

      <rect x="1096.5" y="472.5" width="38" height="95" fill="url(#light)" stroke="#444" />
      <rect x="1096.5" y="282.5" width="38" height="95" fill="url(#light)" stroke="#000" />
      <Crossed x={1096.5} y={377.5} w={37} h={47} />
      <Crossed x={1096.5} y={425.5} w={37} h={47} />
      <path d="M1096 377.5h38M1096 425h38M1096.5 283v190M1096 472.5h38" stroke="#000" fill="none" />
      <g fill="none" stroke="#333">
        <path d="M1102 298l20 31-20 33" />
        <path d="M1126 308h5l-1 22 1 22h-5" fill="#c9c9c9" />
        <path d="M1121.5 292h2v14l2 5v38l-2 5v13h-2z" fill="#555" stroke="#222" />
      </g>
      <path d="M1135 281v292" stroke="#000" strokeWidth="2" />

      <g stroke="#4a4a4a">
        <path d="M1156.5 277h48v30h-48zM1156.5 402h48v31h-48z" fill="url(#light)" stroke="none" />
        <path d="M1213.5 277h48v30h-48zM1213.5 402h48v31h-48z" fill="url(#light)" stroke="none" />
        <path d="M1156.5 307v-37.5h47.5v37.5M1213.5 307v-37.5h48v37.5M1156.5 402v38h47.5v-38M1213.5 402v38h48v-38" fill="none" />
        <path d="M1156.5 269.5h47.5v7h-47.5zM1156.5 432.5h47.5v7.5h-47.5z" fill="url(#dark)" />
        <path d="M1213.5 269.5h48v7h-48zM1213.5 432.5h48v7.5h-48z" fill="url(#dark)" />
        <rect x="1151.5" y="317.5" width="152" height="75" fill="url(#light)" />
      </g>

      <g fontFamily={UI_FONT} fill="#0a0a0a">
        <text x="288" y="417" fontSize="31">ELTERN</text>
        <text x="287" y="446" fontSize="20">14,06 m²</text>
        <text x="917" y="390" fontSize="31">WOHNEN</text>
        <text x="916" y="418" fontSize="20">18,87 m²</text>
      </g>

      <circle cx="251.5" cy="243" r="124" fill="none" stroke="#0808cc" strokeWidth="3" />
      <path d="M613.5 170.5v15l3-3 3 6 2-1-2-6h4z" fill="#fff" stroke="#222" />
    </g>
  </Plan>
);

/* ---------- data ---------- */

const menus = ["Datei", "Bearbeiten", "Einfügen", "Ansicht", "Projekt", "Auswertungen", "Layer", "Geschosse", "Optionen", "Anzeigen", "Fenster", "?"];
const fileTools = [["fresh", "Neu"], ["open", "Öffnen"], ["save", "Speichern"], ["print", "Drucken"], ["undo", "Rückgängig"], ["redo", "Wiederholen"]];
const zoomTools = [["zoomWindow", "Zoom Fenster"], ["zoomAll", "Zoom Alles"], ["zoomPan", "Zoom dynamisch"]];
const tabs = ["KONST", "EnEV", "3D", "GELÄNDE", "2D SICHTEN", "PLÄNE"];
const modules = [["focus", "Fokus"], ["proDoc", "Pro"], ["planAdd", "Plan hinzufügen"], ["chair", "Möbel"], ["tree", "Pflanzen"], ["layers", "Schichten"], ["iray", "Iray"]];
const palette = [
  ["wall", "axis", "windowTool", "door", "opening", "stairs", "railing", "chimney", "column", "beam", "slab", "outline", "roofA", "roofB", "roofC", "dormer", "skylight", "solid"],
  ["line", "polyline", "circle", "text", "select", "mirror", "dimension", "image"],
  ["move", "moveWall", "moveShape", "moveDim", "pipette", "pipetteFill"],
  ["ruler", "section"],
];
const noFlyout = ["chimney", "image", "pipette", "pipetteFill", "section"];
const displayOptions: [string, boolean][] = [
  ["hatch", true], ["fill", true], ["lineWeight", true], ["lineType", true], ["room", true], ["abc", true], ["measure", true],
  ["gridTool", false], ["callout", false], ["loupeOne", false], ["letterS", false], ["frame", true], ["roofSmall", true], ["slabSmall", true], ["strands", false],
];
const snapOptions: [string, boolean][] = [
  ["hint", true], ["cross", false], ["ortho", true], ["grid", false], ["snapPoint", false], ["star", false],
  ["angleRef", false], ["axisRef", false], ["dots", false], ["angleOff", false], ["panel", true], ["scale", false],
];
const pickers = [
  { id: "layer", label: "Layer :", value: "Layer1", spaced: true },
  { id: "geschoss", label: "Geschoss", value: "Erdgeschoss", spaced: false },
  { id: "gebaeude", label: "Gebäude :", value: "<Standard>", spaced: false },
];
const statusCells: [string, number][] = [
  ["1:1 sel", 47], ["X:", 60], ["Y:", 59], ["Z:", 60], ["1:100", 47], ["Zentimeter", 80], ["Ein", 31], ["", 20], ["NUM", 33], ["", 18],
];

const Arrow = ({ d }: { d: string }) => (
  <Svg width="10" height="10" viewBox="0 0 10 10" fill="none" stroke="#444" strokeWidth="2" aria-hidden="true">
    <path d={d} />
  </Svg>
);

const Stroke = ({ d, size, width = 1 }: { d: string; size: number; width?: number }) => (
  <Svg width={size} height={size} viewBox={`0 0 ${size} ${size}`} fill="none" stroke="#333" strokeWidth={width} aria-hidden="true">
    <path d={d} />
  </Svg>
);

export default function App() {
  return (
    <>
      <GlobalStyle />
      <Frame>
        <TitleBar>
          <AppMark />
          <Title>CasCADos - [Wandverschneidung_Stumpf.cad]</Title>
          <CaptionButton aria-label="Minimieren"><Stroke size={12} d="M2 6.5h9" /></CaptionButton>
          <CaptionButton aria-label="Maximieren"><Stroke size={12} d="M1.5 1.5h9v9h-9z" /></CaptionButton>
          <CaptionButton aria-label="Schließen"><Stroke size={12} d="M2 2l9 9M11 2l-9 9" /></CaptionButton>
        </TitleBar>

        <MenuBar>
          <MenuMark><AppMark /></MenuMark>
          {menus.map((m) => <button key={m}>{m}</button>)}
          <ChildButtons>
            <ChildButton aria-label="Kind minimieren"><Stroke size={10} width={2} d="M3 8h4" /></ChildButton>
            <ChildButton aria-label="Kind wiederherstellen"><Stroke size={10} d="M3.5 3.5v-2h5v4h-2M1.5 4.5h5v4h-5z" /></ChildButton>
            <ChildButton aria-label="Kind schließen"><Stroke size={10} width={2} d="M2 2l5 5M7 2l-5 5" /></ChildButton>
          </ChildButtons>
        </MenuBar>

        <ToolBar>
          {fileTools.map(([n, t]) => <ToolButton key={n} aria-label={t}><Icon name={n} /></ToolButton>)}
          <Grip />
          {zoomTools.map(([n, t]) => <ToolButton key={n} aria-label={t}><Icon name={n} /></ToolButton>)}
          <Grip />
          <Tabs>
            {tabs.map((t, i) => <Tab key={t} $active={i === 0}>{t}</Tab>)}
          </Tabs>
          <Modules>
            {modules.map(([n, t]) => <ModuleButton key={n} aria-label={t}><Icon name={n} /></ModuleButton>)}
          </Modules>
        </ToolBar>

        <SubBar>
          <ToolButton aria-label="Hinzufügen"><Icon name="plus" /></ToolButton>
          <Grip $faint />
        </SubBar>

        <Work>
          <Palette>
            <SelectButton aria-label="Auswahl"><Icon name="pointer" /></SelectButton>
            {palette.map((group, i) => (
              <React.Fragment key={i}>
                <PaletteGrip />
                <PaletteGroup>
                  {group.map((n) => (
                    <ToolButton key={n} aria-label={n}><Icon name={n} flyout={!noFlyout.includes(n)} /></ToolButton>
                  ))}
                </PaletteGroup>
              </React.Fragment>
            ))}
          </Palette>
          <Viewer>
            <FloorPlan />
            <Scroll $vertical>
              <ScrollButton aria-label="Nach oben"><Arrow d="M2 7l3-3 3 3" /></ScrollButton>
              <Track $share={172} />
              <Thumb $vertical />
              <Track $share={290} />
              <ScrollButton aria-label="Nach unten"><Arrow d="M2 3l3 3 3-3" /></ScrollButton>
            </Scroll>
            <Scroll>
              <ScrollButton aria-label="Nach links"><Arrow d="M7 2L4 5l3 3" /></ScrollButton>
              <Track $share={406} />
              <Thumb />
              <Track $share={599} />
              <ScrollButton aria-label="Nach rechts"><Arrow d="M3 2l3 3-3 3" /></ScrollButton>
            </Scroll>
            <Corner />
          </Viewer>
        </Work>

        <PickBar>
          {pickers.map((p) => (
            <Picker key={p.id}>
              <Caption htmlFor={p.id} $spaced={p.spaced}>{p.label}</Caption>
              <SelectBox>
                <Select id={p.id} defaultValue={p.value}><option>{p.value}</option></Select>
                <Chevron width="9" height="7" viewBox="0 0 9 7" fill="none" stroke="#444">
                  <path d="M1 1l3.5 4L8 1" />
                </Chevron>
              </SelectBox>
            </Picker>
          ))}
        </PickBar>

        <OptionBar>
          <OptionGroup>
            {displayOptions.map(([n, on]) => <OptionButton key={n} $on={on} aria-label={n}><SmallIcon name={n} /></OptionButton>)}
          </OptionGroup>
          <OptionGap />
          <OptionGroup>
            {snapOptions.map(([n, on]) => <OptionButton key={n} $on={on} aria-label={n}><SmallIcon name={n} /></OptionButton>)}
          </OptionGroup>
        </OptionBar>

        <StatusBar>
          <Message>Mit &lt;Umschalt&gt; und &lt;Strg&gt; können Sie die Auswahl per Polygon beginnen</Message>
          <StatusCell $w={164} $plain>Selektion</StatusCell>
          {statusCells.map(([t, w], i) => <StatusCell key={i} $w={w}>{t}</StatusCell>)}
          <StatusCell $w={17}>
            <Svg width="10" height="14" viewBox="0 0 10 14" fill="#b5b5b5" aria-hidden="true">
              <path d="M7 5h2v2H7zM7 8h2v2H7zM4 8h2v2H4zM7 11h2v2H7zM4 11h2v2H4zM1 11h2v2H1z" />
            </Svg>
          </StatusCell>
        </StatusBar>
      </Frame>
    </>
  );
}
